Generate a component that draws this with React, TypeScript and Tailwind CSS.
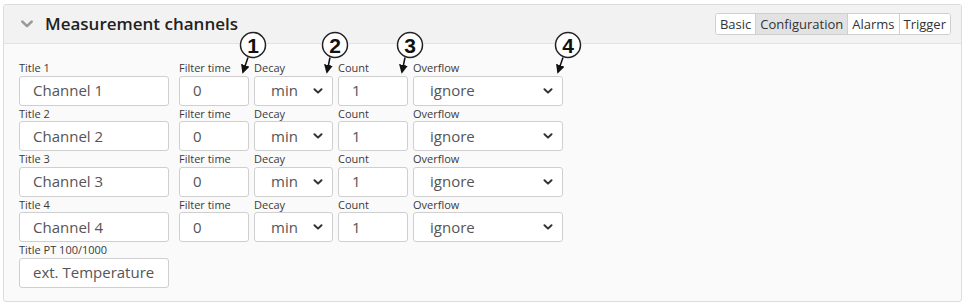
import { useState } from "react";

const channels = ["Channel 1", "Channel 2", "Channel 3", "Channel 4"];

const marks = [
    { n: "1", cx: 253, tipX: 243 },
    { n: "2", cx: 335, tipX: 327 },
    { n: "3", cx: 410, tipX: 402 },
    { n: "4", cx: 568, tipX: 558 },
];

function Chevron({ className }: { className?: string }) {
    return (
        <svg viewBox="0 0 10 6" className={className} fill="none" stroke="currentColor" strokeWidth="2" strokeLinecap="round" strokeLinejoin="round">
            <path d="M1.5 1.2 L5 4.6 L8.5 1.2" />
        </svg>
    );
}

function Field({ label, value, width, select }: { label: string; value: string; width: string; select?: boolean }) {
    return (
        <div className={`flex flex-col ${width}`}>
            <label className="h-[15.5px] text-[11px] leading-[15px] text-[#3a3a3a]">{label}</label>
            <div className="flex h-[30px] items-center justify-between rounded-[3px] border border-[#cfcfcf] bg-white pl-[13px] pr-[9px] text-[15px] text-[#555]">
                <span className={select ? "pl-[3px]" : ""}>{value}</span>
                {select && <Chevron className="h-[6px] w-[10px] text-[#333]" />}
            </div>
        </div>
    );
}

export default function App() {
    const [tab, setTab] = useState("Configuration");
    const tabs = ["Basic", "Configuration", "Alarms", "Trigger"];

    return (
        <div className="relative h-[305px] w-[966px] bg-white pl-[3px] pr-[4px] pt-[4px]" style={{ fontFamily: '"Open Sans", sans-serif' }}>
            <div className="overflow-hidden rounded-[3px] border border-[#dcdcdc] bg-[#fafafa]">
                <div className="flex h-[39px] items-center justify-between border-b border-[#e2e2e2] bg-[#f2f2f2] pl-[16px] pr-[10px]">
                    <div className="flex items-center gap-[11px]">
                        <Chevron className="h-[8px] w-[14px] text-[#9a9a9a]" />
                        <span className="text-[17px] font-semibold text-[#222]">Measurement channels</span>
                    </div>
                    <div className="flex h-[22px] overflow-hidden rounded-[3px] border border-[#cfcfcf] bg-white text-[13px] text-[#333]">
                        {tabs.map((t, i) => (
                            <button
                                key={t}
                                onClick={() => setTab(t)}
                                className={`px-[4px] leading-[20px] ${i > 0 ? "border-l border-[#cfcfcf]" : ""} ${tab === t ? "bg-[#e2e2e2]" : "bg-white"}`}
                            >
                                {t}
                            </button>
                        ))}
                    </div>
                </div>
                <div className="flex flex-col pb-[13px] pl-[15px] pt-[16px]">
                    {channels.map((c, i) => (
                        <div key={c} className="flex gap-[5px]">
                            <Field label={`Title ${i + 1}`} value={c} width="w-[150px] mr-[5px]" />
                            <Field label="Filter time" value="0" width="w-[70px]" />
                            <Field label="Decay" value="min" width="w-[79px]" select />
                            <Field label="Count" value="1" width="w-[70px]" />
                            <Field label="Overflow" value="ignore" width="w-[150px]" select />
                        </div>
                    ))}
                    <div className="flex">
                        <Field label="Title PT 100/1000" value="ext. Temperature" width="w-[150px]" />
                    </div>
                </div>
            </div>

            <svg className="pointer-events-none absolute left-0 top-0" width="966" height="305">
                <defs>
                    <marker id="ah" viewBox="0 0 10 10" refX="8" refY="5" markerWidth="6" markerHeight="6" orient="auto">
                        <path d="M0 0 L10 5 L0 10 Z" fill="#111" />
                    </marker>
                </defs>
                {marks.map((m) => (
                    <g key={m.n}>
                        <circle cx={m.cx} cy={45} r={12.5} fill="white" stroke="#222" strokeWidth="1.5" />
                        <text x={m.cx} y={53} textAnchor="middle" fontSize="21" fontWeight="bold" fill="#111" fontFamily='"Liberation Sans", Arial, sans-serif'>
                            {m.n}
                        </text>
                        <line x1={m.cx - 5} y1={57.5} x2={m.tipX} y2={72} stroke="#111" strokeWidth="1.5" markerEnd="url(#ah)" />
                    </g>
                ))}
            </svg>
        </div>
    );
}
